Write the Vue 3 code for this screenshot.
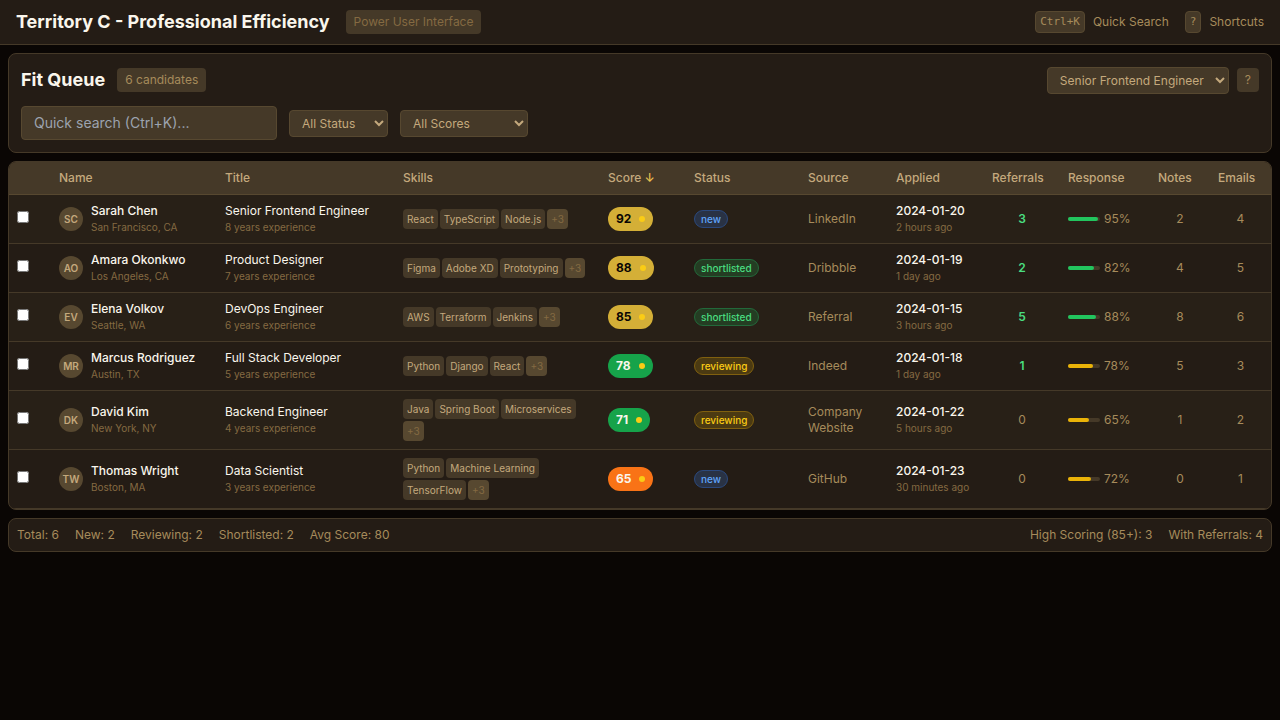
<script setup>
import { ref } from 'vue'

const search = ref('')
const status = ref('All Status')
const score = ref('All Scores')
const job = ref('Senior Frontend Engineer')

const columns = [
  { key: 'name', label: 'Name' },
  { key: 'title', label: 'Title' },
  { key: 'skills', label: 'Skills' },
  { key: 'score', label: 'Score', sorted: true },
  { key: 'status', label: 'Status' },
  { key: 'source', label: 'Source' },
  { key: 'applied', label: 'Applied' },
  { key: 'referrals', label: 'Referrals' },
  { key: 'response', label: 'Response' },
  { key: 'notes', label: 'Notes' },
  { key: 'emails', label: 'Emails' }
]

const candidates = [
  { initials: 'SC', name: 'Sarah Chen', place: 'San Francisco, CA', title: 'Senior Frontend Engineer', years: 8, skills: ['React', 'TypeScript', 'Node.js'], score: 92, status: 'new', source: 'LinkedIn', applied: '2024-01-20', ago: '2 hours ago', referrals: 3, response: 95, notes: 2, emails: 4 },
  { initials: 'AO', name: 'Amara Okonkwo', place: 'Los Angeles, CA', title: 'Product Designer', years: 7, skills: ['Figma', 'Adobe XD', 'Prototyping'], score: 88, status: 'shortlisted', source: 'Dribbble', applied: '2024-01-19', ago: '1 day ago', referrals: 2, response: 82, notes: 4, emails: 5 },
  { initials: 'EV', name: 'Elena Volkov', place: 'Seattle, WA', title: 'DevOps Engineer', years: 6, skills: ['AWS', 'Terraform', 'Jenkins'], score: 85, status: 'shortlisted', source: 'Referral', applied: '2024-01-15', ago: '3 hours ago', referrals: 5, response: 88, notes: 8, emails: 6 },
  { initials: 'MR', name: 'Marcus Rodriguez', place: 'Austin, TX', title: 'Full Stack Developer', years: 5, skills: ['Python', 'Django', 'React'], score: 78, status: 'reviewing', source: 'Indeed', applied: '2024-01-18', ago: '1 day ago', referrals: 1, response: 78, notes: 5, emails: 3 },
  { initials: 'DK', name: 'David Kim', place: 'New York, NY', title: 'Backend Engineer', years: 4, skills: ['Java', 'Spring Boot', 'Microservices'], score: 71, status: 'reviewing', source: 'Company Website', applied: '2024-01-22', ago: '5 hours ago', referrals: 0, response: 65, notes: 1, emails: 2 },
  { initials: 'TW', name: 'Thomas Wright', place: 'Boston, MA', title: 'Data Scientist', years: 3, skills: ['Python', 'Machine Learning', 'TensorFlow'], score: 65, status: 'new', source: 'GitHub', applied: '2024-01-23', ago: '30 minutes ago', referrals: 0, response: 72, notes: 0, emails: 1 }
]

const scoreClass = (n) => (n >= 85 ? 'gold' : n >= 70 ? 'green' : 'orange')
</script>

<template>
  <div class="page">
    <header class="topbar">
      <div class="group">
        <h1>Territory C - Professional Efficiency</h1>
        <span class="tag dim">Power User Interface</span>
      </div>
      <div class="group">
        <span class="hint"><kbd>Ctrl+K</kbd> Quick Search</span>
        <span class="hint"><kbd>?</kbd> Shortcuts</span>
      </div>
    </header>

    <main>
      <section class="panel filters">
        <div class="row">
          <div class="row-left">
            <h2>Fit Queue</h2>
            <span class="tag">6 candidates</span>
          </div>
          <div class="row-right">
            <select v-model="job" aria-label="Job">
              <option>Senior Frontend Engineer</option>
              <option>Product Designer</option>
            </select>
            <button type="button" class="tag help" aria-label="Help">?</button>
          </div>
        </div>
        <div class="row-left">
          <input v-model="search" class="search" type="text" placeholder="Quick search (Ctrl+K)..." aria-label="Quick search" />
          <select v-model="status" class="status-select" aria-label="Status">
            <option>All Status</option>
            <option>New</option>
            <option>Reviewing</option>
            <option>Shortlisted</option>
          </select>
          <select v-model="score" class="score-select" aria-label="Scores">
            <option>All Scores</option>
            <option>High (85+)</option>
          </select>
        </div>
      </section>

      <section class="panel table-panel">
        <table>
          <colgroup>
            <col class="c-check" />
            <col v-for="c in columns" :key="c.key" :class="'c-' + c.key" />
          </colgroup>
          <thead>
            <tr>
              <td></td>
              <th v-for="c in columns" :key="c.key" scope="col">
                {{ c.label }} <span v-if="c.sorted" class="arrow">↓</span>
              </th>
            </tr>
          </thead>
          <tbody>
            <tr v-for="c in candidates" :key="c.name">
              <td class="check"><input type="checkbox" :aria-label="'Select ' + c.name" /></td>
              <td>
                <div class="person">
                  <span class="avatar">{{ c.initials }}</span>
                  <div>
                    <div class="main">{{ c.name }}</div>
                    <div class="sub">{{ c.place }}</div>
                  </div>
                </div>
              </td>
              <td>
                <div class="main plain">{{ c.title }}</div>
                <div class="sub">{{ c.years }} years experience</div>
              </td>
              <td>
                <div class="skills">
                  <span v-for="s in c.skills" :key="s" class="skill">{{ s }}</span>
                  <span class="skill more">+3</span>
                </div>
              </td>
              <td>
                <div class="score" :class="scoreClass(c.score)">{{ c.score }}<i class="dot"></i></div>
              </td>
              <td><div class="badge" :class="c.status">{{ c.status }}</div></td>
              <td>{{ c.source }}</td>
              <td>
                <div class="main">{{ c.applied }}</div>
                <div class="sub">{{ c.ago }}</div>
              </td>
              <td class="num" :class="{ referred: c.referrals }">{{ c.referrals }}</td>
              <td>
                <div class="response">
                  <div class="track">
                    <div class="fill" :class="{ high: c.response >= 80 }" :style="{ width: c.response + '%' }"></div>
                  </div>
                  {{ c.response }}%
                </div>
              </td>
              <td class="num">{{ c.notes }}</td>
              <td class="num">{{ c.emails }}</td>
            </tr>
          </tbody>
        </table>
      </section>

      <footer class="panel summary">
        <div class="group">
          <span>Total: 6</span>
          <span>New: 2</span>
          <span>Reviewing: 2</span>
          <span>Shortlisted: 2</span>
          <span>Avg Score: 80</span>
        </div>
        <div class="group">
          <span>High Scoring (85+): 3</span>
          <span>With Referrals: 4</span>
        </div>
      </footer>
    </main>
  </div>
</template>

<style>
body {
  background: #0a0604;
}
</style>

<style scoped>
* {
  box-sizing: border-box;
}
.page {
  min-height: 100vh;
  background: #0a0604;
  color: #a68b5b;
  font: 12px/16px Inter, "Liberation Sans", sans-serif;
}
.topbar {
  display: flex;
  justify-content: space-between;
  align-items: center;
  padding: 8px 16px;
  background: #241c15;
  border-bottom: 1px solid #453928;
}
h1,
h2 {
  margin: 0;
  font-size: 18px;
  line-height: 28px;
  font-weight: 700;
  color: #faf6ec;
}
.group {
  display: flex;
  align-items: center;
  gap: 16px;
}
.hint {
  display: flex;
  align-items: center;
  gap: 8px;
}
kbd {
  padding: 2px 4px;
  border: 1px solid #574830;
  border-radius: 4px;
  background: #453928;
  font: 11px/16px "DejaVu Sans Mono", monospace;
}
.tag {
  padding: 4px 8px;
  border: 0;
  border-radius: 4px;
  background: #453928;
  color: #a68b5b;
  font: inherit;
}
.tag.dim {
  color: #846a42;
}
main {
  display: flex;
  flex-direction: column;
  gap: 8px;
  padding: 8px;
}
.panel {
  border: 1px solid #453928;
  border-radius: 8px;
  background: #241c15;
}
.filters {
  display: flex;
  flex-direction: column;
  gap: 12px;
  padding: 12px;
}
.row {
  display: flex;
  justify-content: space-between;
}
.row-left {
  display: flex;
  align-items: center;
  gap: 12px;
}
.row-right {
  display: flex;
  align-items: center;
  gap: 8px;
}
select {
  height: 27px;
  padding: 4px 8px;
  border: 1px solid #574830;
  border-radius: 4px;
  background: #453928;
  color: #c4a97d;
  font: 12px/16px Inter, "Liberation Sans", sans-serif;
}
.status-select {
  width: 99px;
}
.score-select {
  width: 128px;
}
.search {
  width: 256px;
  padding: 6px 12px;
  border: 1px solid #574830;
  border-radius: 4px;
  background: #453928;
  color: #faf6ec;
  font: 14px/20px Inter, "Liberation Sans", sans-serif;
}
.search::placeholder {
  color: #9ca3af;
}
.table-panel {
  overflow: hidden;
}
table {
  width: 100%;
  table-layout: fixed;
  border-collapse: separate;
  border-spacing: 0;
}
.c-check { width: 42px; }
.c-name { width: 166px; }
.c-title { width: 178px; }
.c-skills { width: 205px; }
.c-score { width: 86px; }
.c-status { width: 114px; }
.c-source { width: 88px; }
.c-applied { width: 96px; }
.c-referrals { width: 76px; }
.c-response { width: 90px; }
.c-notes { width: 60px; }
.c-emails { width: 61px; }
th,
td {
  padding: 8px;
  border-bottom: 1px solid #453928;
  text-align: left;
  vertical-align: middle;
}
thead th,
thead td {
  background: #453928;
  border-color: #574830;
  color: #c4a97d;
  font-weight: 500;
}
.arrow {
  color: #e8c050;
}
tbody tr:nth-child(odd) {
  background: #282017;
}
.check input {
  display: block;
  width: 12px;
  height: 12px;
  margin: 0 0 4px;
}
.person {
  display: flex;
  align-items: center;
  gap: 8px;
}
.avatar {
  width: 24px;
  height: 24px;
  border-radius: 50%;
  background: #574830;
  color: #c4a97d;
  font-size: 10px;
  line-height: 24px;
  font-weight: 600;
  text-align: center;
}
.main {
  color: #faf6ec;
  font-weight: 500;
}
.plain {
  font-weight: 400;
}
.sub {
  color: #846a42;
  font-size: 10px;
}
.skills {
  display: flex;
  flex-wrap: wrap;
  gap: 2px;
}
.skill {
  padding: 2px 4px;
  border-radius: 4px;
  background: #453928;
  color: #c4a97d;
  font-size: 10px;
}
.skill.more {
  background: #574830;
  color: #846a42;
}
.score {
  display: flex;
  align-items: center;
  gap: 8px;
  width: max-content;
  padding: 4px 8px;
  border-radius: 12px;
  font-weight: 700;
}
.gold {
  background: #d4af37;
  color: #0a0604;
}
.green {
  background: #16a34a;
  color: #faf6ec;
}
.orange {
  background: #f97316;
  color: #faf6ec;
}
.dot {
  width: 6px;
  height: 6px;
  border-radius: 50%;
  background: #facc15;
}
.badge {
  width: max-content;
  padding: 0 6px;
  border: 1px solid;
  border-radius: 9px;
  font-size: 10px;
  font-weight: 500;
}
.new {
  color: #60a5fa;
  background: #293244;
  border-color: #2b497e;
}
.shortlisted {
  color: #4ade80;
  background: #243d23;
  border-color: #22693a;
}
.reviewing {
  color: #facc15;
  background: #4b3a12;
  border-color: #80600f;
}
.num {
  text-align: center;
}
.referred {
  color: #4ade80;
  font-weight: 600;
}
.response {
  display: flex;
  align-items: center;
  gap: 4px;
}
.track {
  width: 32px;
  height: 4px;
  border-radius: 2px;
  background: #453928;
}
.fill {
  height: 4px;
  border-radius: 2px;
  background: #eab308;
}
.high {
  background: #22c55e;
}
.summary {
  display: flex;
  justify-content: space-between;
  padding: 8px;
}
</style>
